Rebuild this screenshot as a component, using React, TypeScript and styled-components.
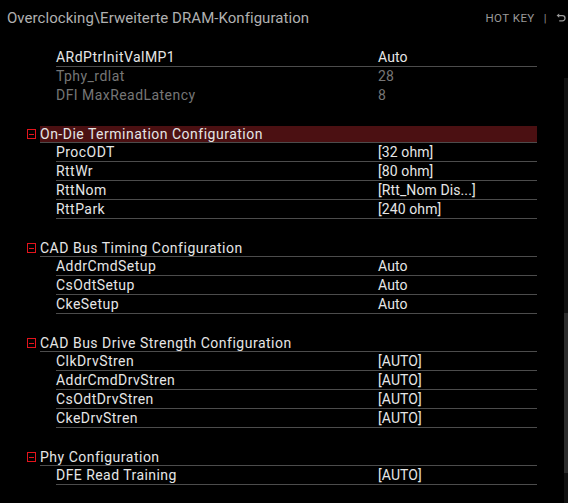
import React from 'react';
import styled, { createGlobalStyle } from 'styled-components';

type Item = { label: string; value: string; dim?: boolean; line?: boolean };
type Section = { title: string; active?: boolean; items: Item[] };

const topItems: Item[] = [
	{ label: 'ARdPtrInitValMP1', value: 'Auto', line: true },
	{ label: 'Tphy_rdlat', value: '28', dim: true },
	{ label: 'DFI MaxReadLatency', value: '8', dim: true },
];

const sections: Section[] = [
	{
		title: 'On-Die Termination Configuration',
		active: true,
		items: [
			{ label: 'ProcODT', value: '[32 ohm]', line: true },
			{ label: 'RttWr', value: '[80 ohm]', line: true },
			{ label: 'RttNom', value: '[Rtt_Nom Dis...]', line: true },
			{ label: 'RttPark', value: '[240 ohm]', line: true },
		],
	},
	{
		title: 'CAD Bus Timing Configuration',
		items: [
			{ label: 'AddrCmdSetup', value: 'Auto', line: true },
			{ label: 'CsOdtSetup', value: 'Auto', line: true },
			{ label: 'CkeSetup', value: 'Auto', line: true },
		],
	},
	{
		title: 'CAD Bus Drive Strength Configuration',
		items: [
			{ label: 'ClkDrvStren', value: '[AUTO]', line: true },
			{ label: 'AddrCmdDrvStren', value: '[AUTO]', line: true },
			{ label: 'CsOdtDrvStren', value: '[AUTO]', line: true },
			{ label: 'CkeDrvStren', value: '[AUTO]', line: true },
		],
	},
	{
		title: 'Phy Configuration',
		items: [{ label: 'DFE Read Training', value: '[AUTO]', line: true }],
	},
];

function CollapseIcon() {
	return (
		<Collapse viewBox="0 0 9 10" shapeRendering="crispEdges">
			<rect x="0.5" y="0.5" width="8" height="9" fill="none" stroke="#e3141c" strokeWidth="1" />
			<rect x="2" y="5" width="5" height="1" fill="#e3141c" />
		</Collapse>
	);
}

export default function App() {
	return (
		<>
			<GlobalStyle />
			<Screen>
				<TopBar>
					<Title>Overclocking\Erweiterte DRAM-Konfiguration</Title>
					<HotKeys>
						<span>HOT KEY</span>
						<Divider>|</Divider>
						<BackIcon viewBox="0 0 10 10">
							<path d="M2.2 2.6 H6.4 A2.6 2.6 0 0 1 6.4 7.8 H3.2" fill="none" stroke="#9a9a9a" strokeWidth="1.3" />
							<path d="M0.6 2.6 L3.2 0.4 V4.8 Z" fill="#9a9a9a" />
						</BackIcon>
					</HotKeys>
				</TopBar>
				<Body>
					<List>
						{topItems.map((it) => (
							<ItemRow key={it.label} $line={it.line} $dim={it.dim}>
								<span>{it.label}</span>
								<Value>{it.value}</Value>
							</ItemRow>
						))}
						{sections.map((s) => (
							<React.Fragment key={s.title}>
								<Spacer />
								<HeaderRow>
									<CollapseIcon />
									<HeaderLabel $active={s.active}>{s.title}</HeaderLabel>
								</HeaderRow>
								{s.items.map((it) => (
									<ItemRow key={it.label} $line={it.line} $dim={it.dim}>
										<span>{it.label}</span>
										<Value>{it.value}</Value>
									</ItemRow>
								))}
							</React.Fragment>
						))}
					</List>
					<ScrollTrack>
						<ScrollThumb />
					</ScrollTrack>
				</Body>
			</Screen>
		</>
	);
}

const GlobalStyle = createGlobalStyle`
	html, body {
		margin: 0;
		background: #000;
	}
	body {
		font-family: Roboto, 'Liberation Sans', sans-serif;
	}
`;

const Screen = styled.div`
	width: 568px;
	height: 503px;
	background: #000;
	overflow: hidden;
	display: flex;
	flex-direction: column;
`;

const TopBar = styled.div`
	height: 38px;
	display: flex;
	align-items: center;
	justify-content: space-between;
	padding: 0 2px 2px 7px;
	box-sizing: border-box;
`;

const Title = styled.div`
	font-size: 15px;
	color: #b0b0b0;
	letter-spacing: 0.05px;
`;

const HotKeys = styled.div`
	display: flex;
	align-items: center;
	gap: 9px;
	font-size: 11.5px;
	letter-spacing: 0.45px;
	color: #9a9a9a;
`;

const Divider = styled.span`
	color: #8a8a8a;
`;

const BackIcon = styled.svg`
	width: 10px;
	height: 10px;
`;

const Body = styled.div`
	flex: 1;
	display: flex;
	min-height: 0;
`;

const List = styled.div`
	width: 537px;
	padding: 10px 0 0 27px;
	box-sizing: border-box;
	display: flex;
	flex-direction: column;
`;

const ItemRow = styled.div<{ $line?: boolean; $dim?: boolean }>`
	height: 18px;
	margin-left: 29px;
	display: grid;
	grid-template-columns: 322px 1fr;
	align-items: center;
	font-size: 14px;
	letter-spacing: 0.45px;
	color: ${(p) => (p.$dim ? '#767676' : '#e6e6e6')};
	border-bottom: 1px solid ${(p) => (p.$line ? '#4c4c4c' : 'transparent')};
	white-space: nowrap;
`;

const Value = styled.span`
	letter-spacing: 0.1px;
`;

const Spacer = styled.div`
	height: 19px;
`;

const HeaderRow = styled.div`
	height: 19px;
	display: flex;
	align-items: flex-end;
	gap: 4px;
`;

const Collapse = styled.svg`
	width: 9px;
	height: 10px;
	flex: none;
	margin-bottom: 4px;
`;

const HeaderLabel = styled.div<{ $active?: boolean }>`
	flex: 1;
	height: 18px;
	box-sizing: border-box;
	padding-top: 1px;
	display: flex;
	align-items: center;
	font-size: 14px;
	letter-spacing: 0.5px;
	color: #e6e6e6;
	background: ${(p) => (p.$active ? 'linear-gradient(#000 0 1px, #4b1012 1px 17px, #000 17px)' : 'transparent')};
	border-bottom: 1px solid #4c4c4c;
`;

const ScrollTrack = styled.div`
	margin-left: auto;
	width: 4px;
	margin-top: 40px;
	background: #111;
	display: flex;
	flex-direction: column;
	justify-content: flex-end;
	padding-bottom: 30px;
`;

const ScrollThumb = styled.div`
	height: 160px;
	background: #2c2c2c;
`;
